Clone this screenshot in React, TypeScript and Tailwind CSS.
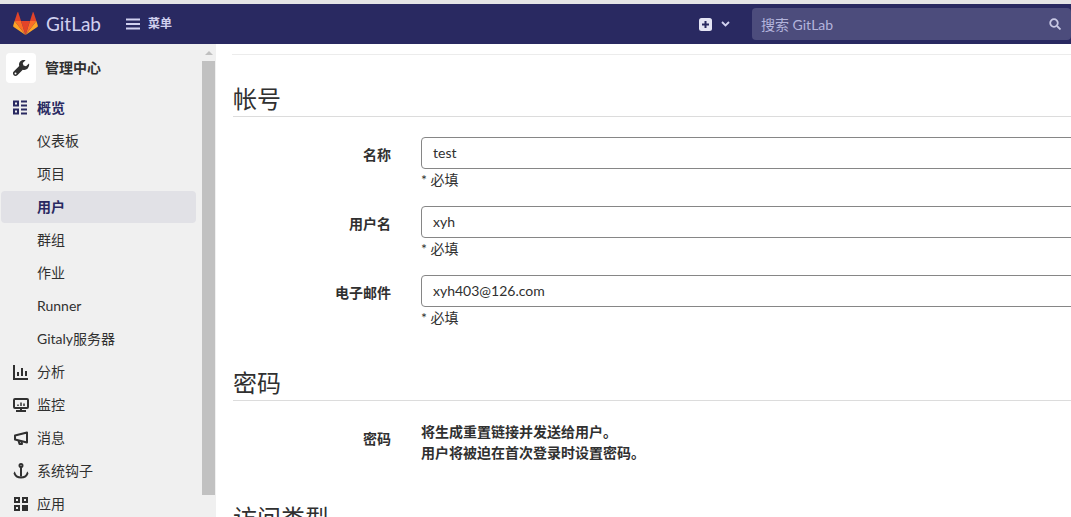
import React from "react";

const font = { fontFamily: 'Lato, "Noto Sans CJK SC", "Noto Sans", sans-serif' };

function Fox() {
  return (
    <svg width="25" height="24" viewBox="0 0 25 24">
      <path d="M12.5 23 L17 9 H8 Z" fill="#e24329" />
      <path d="M12.5 23 L8 9 H1.6 Z" fill="#fc6d26" />
      <path d="M1.6 9 L0.2 13.4 C0 14 .2 14.6 .7 15 L12.5 23 Z" fill="#fca326" />
      <path d="M1.6 9 H8 L5.3 .6 C5.1 .2 4.6 .2 4.4 .6 Z" fill="#e24329" />
      <path d="M12.5 23 L17 9 H23.4 Z" fill="#fc6d26" />
      <path d="M23.4 9 L24.8 13.4 C25 14 24.8 14.6 24.3 15 L12.5 23 Z" fill="#fca326" />
      <path d="M23.4 9 H17 L19.7 .6 C19.9 .2 20.4 .2 20.6 .6 Z" fill="#e24329" />
    </svg>
  );
}

const Overview = () => (
  <svg width="16" height="16" viewBox="0 0 16 16" fill="none" stroke="#292961" strokeWidth="2">
    <rect x="1" y="1.500" width="4" height="4" />
    <rect x="1" y="9.500" width="4" height="4" />
    <path d="M8 1.500h6M8 5.500h6M8 9.500h6M8 13.500h6" />
  </svg>
);
const Chart = () => (
  <svg width="16" height="16" viewBox="0 0 16 16" fill="none" stroke="#303030" strokeWidth="2">
    <path d="M1 1v14h14M5 8v4M9 4v8M13 7v5" />
  </svg>
);
const Monitor = () => (
  <svg width="16" height="16" viewBox="0 0 16 16" fill="none" stroke="#303030" strokeWidth="2">
    <rect x="1" y="2" width="14" height="9" rx="1" />
    <path d="M3 14h10M8 11v3" />
    <path d="M5 9V7.500M8 9V5.500M11 9V6.500" strokeWidth="1.500" />
  </svg>
);
const Megaphone = () => (
  <svg width="16" height="16" viewBox="0 0 16 16" fill="none" stroke="#303030" strokeWidth="2" strokeLinejoin="round">
    <path d="M14 2.500v10L2 9.500v-4z" />
    <path d="M5.500 10.500l1 3.500h2.500l-.5-2.500" />
  </svg>
);
const Hook = () => (
  <svg width="16" height="16" viewBox="0 0 16 16" fill="none" stroke="#303030" strokeWidth="2">
    <circle cx="8" cy="2.500" r="1.500" />
    <path d="M8 4v9.500" />
    <path d="M1 9.500c1 .5 .5 5 7 5s6-4.500 7-5" />
  </svg>
);
const Apps = () => (
  <svg width="16" height="16" viewBox="0 0 16 16" fill="none" stroke="#303030" strokeWidth="2">
    <rect x="2" y="2" width="4" height="4" />
    <rect x="10" y="2" width="4" height="4" />
    <rect x="2" y="10" width="4" height="4" />
    <rect x="10" y="10" width="4" height="4" fill="#303030" />
  </svg>
);

function TopItem({ icon, label, active }: { icon: React.ReactNode; label: string; active?: boolean }) {
  return (
    <div className={`flex items-center h-[33px] pl-[13px] text-[14px] ${active ? "font-bold text-[#292961]" : "text-[#303030]"}`}>
      <span className="w-[24px] flex items-center shrink-0">{icon}</span>
      <span>{label}</span>
    </div>
  );
}

function SubItem({ label, active }: { label: string; active?: boolean }) {
  return (
    <div
      className={`flex items-center h-[32px] mt-px ml-[1px] mr-[6px] pl-[36px] pb-[2px] rounded text-[14px] ${
        active ? "bg-[#e1e1e6] font-bold text-[#292961]" : "text-[#303030]"
      }`}
    >
      {label}
    </div>
  );
}

function Field({ label, value }: { label: string; value: string }) {
  return (
    <div className="flex mb-[18px]">
      <div className="w-[158px] shrink-0 text-right text-[14px] font-bold text-[#303030] pt-[7px]">{label}</div>
      <div className="ml-[30px] flex-1 min-w-0">
        <div className="h-[32px] w-[700px] border border-[#868686] rounded flex items-center pl-[11px] pb-[2px] text-[14px] text-[#303030]">
          {value}
        </div>
        <div className="mt-[2px] text-[14px] leading-[17px] text-[#303030]">* 必填</div>
      </div>
    </div>
  );
}

export default function App() {
  return (
    <div className="w-[1071px] h-[517px] overflow-hidden bg-white flex flex-col" style={font}>
      <div className="h-[4px] bg-[#e4e4e6] shrink-0" />
      <header className="h-[40px] shrink-0 bg-[#292961] flex items-center pl-[13px] pr-0">
        <Fox />
        <span className="ml-[8px] text-[19px] text-[#d1d1f0]">GitLab</span>
        <svg className="ml-[25px]" width="14" height="12" viewBox="0 0 14 12" fill="#d1d1f0">
          <rect y="0.500" width="14" height="2" />
          <rect y="5" width="14" height="2" />
          <rect y="9.500" width="14" height="2" />
        </svg>
        <span className="ml-[8px] text-[12px] font-bold text-[#d1d1f0]">菜单</span>
        <div className="flex-1" />
        <svg width="13" height="13" viewBox="0 0 13 13">
          <rect width="13" height="13" rx="2.500" fill="#e4e4f4" />
          <path d="M6.500 3v7M3 6.500h7" stroke="#292961" strokeWidth="2" />
        </svg>
        <svg className="ml-[9px]" width="9" height="6" viewBox="0 0 9 6" fill="none" stroke="#d1d1f0" strokeWidth="1.800">
          <path d="M1 1l3.500 3.500L8 1" />
        </svg>
        <div className="ml-[22px] w-[319px] h-[32px] bg-[#4c4c7c] rounded flex items-center pl-[9px] pr-[10px] text-[14px] text-[#b4b4dc]">
          <span className="flex-1">搜索 GitLab</span>
          <svg width="12" height="12" viewBox="0 0 12 12" fill="none" stroke="#c8c8e4" strokeWidth="1.800">
            <circle cx="5" cy="5" r="3.800" />
            <path d="M8 8l3.500 3.500" />
          </svg>
        </div>
      </header>
      <div className="flex flex-1 min-h-0">
        <aside className="w-[216px] shrink-0 bg-[#f0f0f0] flex overflow-hidden">
          <div className="w-[202px] shrink-0">
            <div className="flex items-center h-[47px] pl-[6px]">
              <div className="w-[30px] h-[30px] bg-white rounded flex items-center justify-center">
                <svg width="18" height="18" viewBox="0 0 18 18" fill="#303030">
                  <path fillRule="evenodd" d="M17 4.500l-3 2.800-2.500-.7-.8-2.500L13.600 1.200C11.800.5 9.700 1 8.400 2.300 7.100 3.600 6.700 5.500 7.200 7.100L1.700 12.600c-1 1-1 2.600 0 3.600s2.700 1 3.600 0l5.500-5.500c1.700.5 3.600.1 4.900-1.200C17 7.300 17.500 5.800 17 4.500zM3.500 15.500a1 1 0 1 1 0-2 1 1 0 0 1 0 2z" />
                </svg>
              </div>
              <span className="ml-[9px] text-[14px] font-bold text-[#303030]">管理中心</span>
            </div>
            <TopItem icon={<Overview />} label="概览" active />
            <SubItem label="仪表板" />
            <SubItem label="项目" />
            <SubItem label="用户" active />
            <SubItem label="群组" />
            <SubItem label="作业" />
            <SubItem label="Runner" />
            <SubItem label="Gitaly服务器" />
            <TopItem icon={<Chart />} label="分析" />
            <TopItem icon={<Monitor />} label="监控" />
            <TopItem icon={<Megaphone />} label="消息" />
            <TopItem icon={<Hook />} label="系统钩子" />
            <TopItem icon={<Apps />} label="应用" />
          </div>
          <div className="w-[14px] shrink-0 flex flex-col">
            <div className="h-[17px] flex items-center justify-center">
              <div className="w-0 h-0 border-l-[4px] border-r-[4px] border-b-[4px] border-l-transparent border-r-transparent border-b-[#c0c0c0]" />
            </div>
            <div className="h-[434px] w-[13px] bg-[#c1c1c1]" />
          </div>
        </aside>
        <main className="flex-1 min-w-0 overflow-hidden pl-[17px]">
          <div className="h-[11px] border-b border-[#ececec] -ml-[1px]" />
          <h2 className="mt-[25px] pt-[2px] text-[24px] leading-[34px] text-[#303030] border-b border-[#dcdcdc] h-[37px] w-[900px]">帐号</h2>
          <div className="mt-[20px]">
            <Field label="名称" value="test" />
            <Field label="用户名" value="xyh" />
            <Field label="电子邮件" value="xyh403@126.com" />
          </div>
          <h2 className="mt-[38px] pt-[2px] text-[24px] leading-[34px] text-[#303030] border-b border-[#dcdcdc] h-[37px] w-[900px]">密码</h2>
          <div className="flex mt-[20px]">
            <div className="w-[158px] shrink-0 text-right text-[14px] font-bold text-[#303030] pt-[7px]">密码</div>
            <div className="ml-[30px] text-[14px] font-bold leading-[21px] text-[#303030]">
              <p>将生成重置链接并发送给用户。</p>
              <p>用户将被迫在首次登录时设置密码。</p>
            </div>
          </div>
          <h2 className="mt-[37px] text-[24px] leading-[36px] text-[#303030]">访问类型</h2>
        </main>
      </div>
    </div>
  );
}
